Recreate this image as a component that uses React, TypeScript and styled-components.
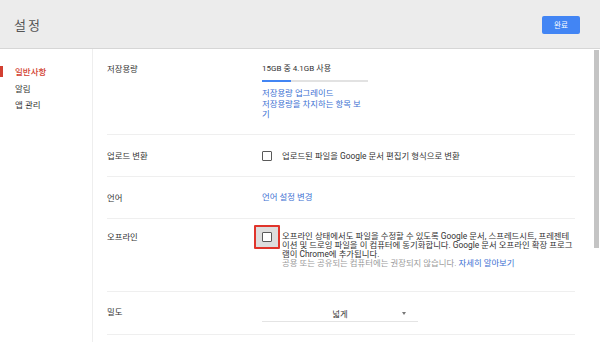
import React from 'react';
import styled, { createGlobalStyle } from 'styled-components';

const GlobalStyle = createGlobalStyle`
  html, body {
    margin: 0;
    padding: 0;
    background: #ffffff;
  }
  body {
    font-family: Roboto, "Noto Sans CJK KR", "Noto Sans", sans-serif;
    color: #333333;
    word-break: break-all;
  }
`;

const colors = {
  header: '#ececec',
  border: '#d6d6d6',
  divider: '#efefef',
  text: '#333333',
  muted: '#9a9a9a',
  link: '#3b6fd2',
  red: '#d23f31',
  blue: '#4285f4'
};

// Styling
const Page = styled.div`
  position: relative;
  width: 600px;
  height: 342px;
  overflow: hidden;
  display: flex;
  flex-direction: column;
`;

const Header = styled.header`
  height: 48px;
  flex: none;
  background: ${colors.header};
  border-bottom: 1px solid ${colors.border};
  display: flex;
  align-items: center;
  justify-content: space-between;
  padding: 0 20px 0 14px;
`;

const Title = styled.h1`
  margin: 0;
  font-size: 13px;
  font-weight: 400;
  letter-spacing: 2px;
  color: #555555;
`;

const DoneButton = styled.button`
  width: 38px;
  height: 18px;
  border: none;
  border-radius: 2px;
  background: ${colors.blue};
  color: #ffffff;
  font-family: inherit;
  font-size: 7.5px;
  padding: 0;
  margin-top: 1px;
`;

const Body = styled.div`
  flex: 1;
  display: flex;
  min-height: 0;
`;

const Sidebar = styled.nav`
  width: 92px;
  flex: none;
  border-right: 1px solid #eeeeee;
  padding-top: 15px;
`;

const NavItem = styled.div<{ active?: boolean }>`
  position: relative;
  height: 16.5px;
  line-height: 16px;
  padding-left: 15px;
  font-size: 8.5px;
  font-weight: ${({ active }) => (active ? 500 : 400)};
  color: ${({ active }) => (active ? colors.red : colors.text)};

  &::before {
    content: '';
    display: ${({ active }) => (active ? 'block' : 'none')};
    position: absolute;
    left: 0;
    top: 2px;
    width: 3px;
    height: 11px;
    background: ${colors.red};
  }
`;

const Main = styled.main`
  flex: 1;
  padding: 0 25px 0 14px;
`;

const Row = styled.section<{ pt: number; pb: number }>`
  display: grid;
  grid-template-columns: 155px 1fr;
  align-items: start;
  padding: ${({ pt, pb }) => `${pt}px 0 ${pb}px`};
  border-bottom: 1px solid ${colors.divider};
`;

const Label = styled.div`
  font-size: 8.4px;
  line-height: 12px;
  color: ${colors.text};
`;

const Storage = styled.div`
  width: 106px;
`;

const UsageText = styled.div`
  font-size: 8px;
  line-height: 12px;
  color: ${colors.text};
`;

const Track = styled.div`
  margin-top: 5px;
  height: 2px;
  width: 106px;
  background: #e2e2e2;
`;

const Fill = styled.div`
  height: 100%;
  background: ${colors.blue};
`;

const LinkList = styled.div`
  margin-top: 6px;
  width: 103px;
  display: flex;
  flex-direction: column;
`;

const Link = styled.a`
  font-size: 8.4px;
  line-height: 10.5px;
  color: ${colors.link};
  text-decoration: none;
`;

const CheckLine = styled.label`
  display: flex;
  align-items: flex-start;
  gap: 10px;
  font-size: 8.4px;
  line-height: 12px;
  color: ${colors.text};
`;

const CheckWrap = styled.span`
  position: relative;
  flex: none;
  width: 10px;
  height: 12px;
  display: flex;
  align-items: center;
`;

const Box = styled.span`
  position: relative;
  z-index: 1;
  width: 10px;
  height: 10px;
  box-sizing: border-box;
  border: 1.5px solid #5a5a5a;
  border-radius: 1px;
  background: #ffffff;
`;

const Highlight = styled.span`
  position: absolute;
  left: -8px;
  top: -6px;
  width: 26px;
  height: 24px;
  box-sizing: border-box;
  border: 2px solid #e0342b;
  background: #dddddd;
  border-radius: 1px;
`;

const Paragraph = styled.div`
  width: 292px;
  font-size: 8.4px;
  line-height: 9px;
  color: ${colors.text};
  padding-top: 1px;
`;

const Note = styled.div`
  color: ${colors.muted};
`;

const NoteLink = styled.a`
  color: ${colors.link};
  text-decoration: none;
`;

const Select = styled.div`
  position: relative;
  width: 156px;
  height: 16px;
  box-sizing: border-box;
  border-bottom: 1px solid #e4e4e4;
  display: flex;
  align-items: center;
  justify-content: center;
  font-size: 8.4px;
  color: ${colors.text};
`;

const Caret = styled.span`
  position: absolute;
  right: 12px;
  top: 6px;
  width: 0;
  height: 0;
  border-left: 2.5px solid transparent;
  border-right: 2.5px solid transparent;
  border-top: 3px solid #777777;
`;

const Scrollbar = styled.div`
  position: absolute;
  right: 1px;
  top: 50px;
  width: 5px;
  height: 198px;
  background: #c4c4c4;
`;

const used = 4.1;
const total = 15;

const App = (): JSX.Element => {
  return (
    <Page>
      <GlobalStyle />
      <Header>
        <Title>설정</Title>
        <DoneButton>완료</DoneButton>
      </Header>
      <Body>
        <Sidebar>
          <NavItem active>일반사항</NavItem>
          <NavItem>알림</NavItem>
          <NavItem>앱 관리</NavItem>
        </Sidebar>
        <Main>
          <Row pt={14} pb={14}>
            <Label>저장용량</Label>
            <Storage>
              <UsageText>15GB 중 4.1GB 사용</UsageText>
              <Track>
                <Fill style={{ width: `${(used / total) * 100}%` }} />
              </Track>
              <LinkList>
                <Link href="#">저장용량 업그레이드</Link>
                <Link href="#">저장용량을 차지하는 항목 보기</Link>
              </LinkList>
            </Storage>
          </Row>
          <Row pt={15} pb={14}>
            <Label>업로드 변환</Label>
            <CheckLine>
              <CheckWrap>
                <Box />
              </CheckWrap>
              업로드된 파일을 Google 문서 편집기 형식으로 변환
            </CheckLine>
          </Row>
          <Row pt={15} pb={14}>
            <Label>언어</Label>
            <Link href="#">언어 설정 변경</Link>
          </Row>
          <Row pt={12} pb={23}>
            <Label>오프라인</Label>
            <CheckLine>
              <CheckWrap>
                <Highlight />
                <Box />
              </CheckWrap>
              <Paragraph>
                오프라인 상태에서도 파일을 수정할 수 있도록 Google 문서, 스프레드시트, 프레젠테이션 및 드로잉 파일을 이 컴퓨터에 동기화합니다. Google 문서 오프라인 확장 프로그램이 Chrome에 추가됩니다.
                <Note>
                  공용 또는 공유되는 컴퓨터에는 권장되지 않습니다. <NoteLink href="#">자세히 알아보기</NoteLink>
                </Note>
              </Paragraph>
            </CheckLine>
          </Row>
          <Row pt={14} pb={12}>
            <Label>밀도</Label>
            <Select>
              넓게
              <Caret />
            </Select>
          </Row>
        </Main>
      </Body>
      <Scrollbar />
    </Page>
  );
};

export default App;
